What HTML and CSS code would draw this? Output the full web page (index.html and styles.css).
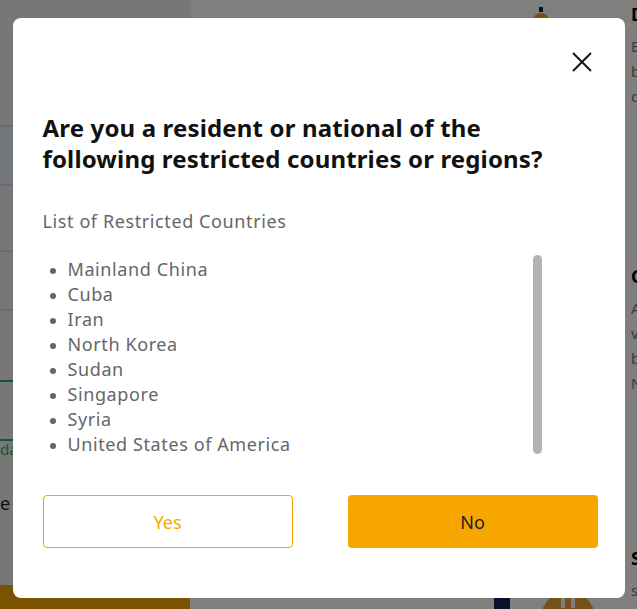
FILE: index.html
```html
<!DOCTYPE html>
<html lang="en">
<head>
    <meta charset="UTF-8">
    <meta name="viewport" content="width=device-width, initial-scale=1.0">
    <title>Restricted Countries</title>
    <link rel="stylesheet" href="styles.css">
</head>
<body>

    <div class="page">
        <aside class="side">
            <div class="side-head"></div>
            <div class="side-tab"></div>
            <div class="side-row"></div>
            <div class="side-row short"></div>
            <div class="side-gap"></div>
            <div class="side-green">
                <span class="green-text">da</span>
            </div>
            <div class="side-note">e t</div>
            <div class="side-bar"></div>
        </aside>

        <main class="center">
            <div class="top-icon">
                <svg width="16" height="14" viewBox="0 0 16 14">
                    <circle cx="8" cy="14" r="8" fill="#ec9e10"/>
                    <rect x="6" y="0" width="4" height="5" fill="#122054"/>
                </svg>
            </div>
            <div class="bottom-icons">
                <span class="navy-box"></span>
                <span class="chat-ball">
                    <svg width="54" height="20" viewBox="0 0 54 20">
                        <rect x="20" y="5" width="4" height="12" fill="#fff"/>
                        <rect x="30" y="5" width="4" height="12" fill="#fff"/>
                    </svg>
                </span>
            </div>
        </main>

        <aside class="info">
            <h4>D</h4>
            <p>E</p>
            <p>b</p>
            <p>c</p>
            <h4 class="gap-top">C</h4>
            <p>A</p>
            <p>v</p>
            <p>b</p>
            <p>N</p>
            <h4 class="gap-big">S</h4>
            <p>s</p>
        </aside>
    </div>

    <div class="overlay">
        <div class="modal">
            <div class="modal-top">
                <button class="close" aria-label="Close">
                    <svg width="20" height="20" viewBox="0 0 20 20">
                        <path d="M1 1 L19 19 M19 1 L1 19" stroke="#111" stroke-width="1.9" fill="none"/>
                    </svg>
                </button>
            </div>

            <h2>Are you a resident or national of the following restricted countries or regions?</h2>

            <p class="subtitle">List of Restricted Countries</p>

            <div class="list-box">
                <ul class="countries">
                    <li>Mainland China</li>
                    <li>Cuba</li>
                    <li>Iran</li>
                    <li>North Korea</li>
                    <li>Sudan</li>
                    <li>Singapore</li>
                    <li>Syria</li>
                    <li>United States of America</li>
                </ul>
                <div class="thumb"></div>
            </div>

            <div class="actions">
                <button class="btn btn-outline">Yes</button>
                <button class="btn btn-fill">No</button>
            </div>
        </div>
    </div>

</body>
</html>
```

FILE: styles.css
```css
body {
    margin: 0;
    font-family: 'Noto Sans', 'Noto Sans CJK KR', sans-serif;
    overflow: hidden;
}

.page {
    display: grid;
    grid-template-columns: 190px 1fr 9px;
    height: 609px;
    overflow: hidden;
    background: #ffffff;
}

.side {
    background: #efefef;
    display: flex;
    flex-direction: column;
    overflow: hidden;
}

.side-head {
    height: 125px;
    border-bottom: 2px solid #d8d8d8;
}

.side-tab {
    height: 57px;
    background: #e6ecf7;
    border-bottom: 2px solid #d8d8d8;
}

.side-row {
    height: 64px;
    border-bottom: 2px solid #d8d8d8;
}

.side-row.short {
    height: 57px;
}

.side-gap {
    height: 69px;
    border-bottom: 2px solid #20b26c;
}

.side-green {
    height: 57px;
    border-bottom: 2px solid #20b26c;
    display: flex;
    align-items: flex-end;
}

.green-text {
    color: #20b26c;
    font-size: 15px;
    margin-bottom: -20px;
}

.side-note {
    margin-top: 50px;
    font-size: 18px;
    color: #222;
}

.side-bar {
    margin-top: auto;
    height: 24px;
    background: #f7a600;
}

.center {
    display: flex;
    flex-direction: column;
    justify-content: space-between;
    overflow: hidden;
}

.top-icon {
    margin: 7px 0 0 343px;
    line-height: 0;
}

.bottom-icons {
    display: flex;
    align-items: flex-start;
    margin-left: 304px;
    height: 18px;
}

.navy-box {
    flex: none;
    width: 16px;
    height: 18px;
    margin-top: 7px;
    background: #122054;
}

.chat-ball {
    flex: none;
    width: 54px;
    height: 54px;
    margin-left: 31px;
    border-radius: 50%;
    background: #e9a135;
    line-height: 0;
}

.info {
    padding-left: 3px;
    overflow: hidden;
    white-space: nowrap;
    font-size: 15px;
}

.info h4 {
    margin: 2px 0 8px;
    font-size: 18px;
    color: #000;
}

.info h4.gap-top {
    margin-top: 155px;
}

.info h4.gap-big {
    margin-top: 150px;
}

.info p {
    margin: 0;
    line-height: 25px;
    color: #777;
}

.overlay {
    position: fixed;
    inset: 0;
    background: rgba(0, 0, 0, 0.5);
    display: flex;
    justify-content: center;
    align-items: flex-start;
    padding-top: 18px;
}

.modal {
    width: 612px;
    height: 580px;
    box-sizing: border-box;
    padding: 0 27px 0 30px;
    background: #ffffff;
    border-radius: 8px;
}

.modal-top {
    display: flex;
    justify-content: flex-end;
    padding-top: 34px;
    height: 20px;
}

.close {
    background: none;
    border: none;
    padding: 0;
    margin-right: 6px;
    cursor: pointer;
    line-height: 0;
}

.modal h2 {
    max-width: 512px;
    margin: 40px 0 0;
    font-size: 24px;
    line-height: 31px;
    font-weight: 700;
    letter-spacing: 0.15px;
    color: #111;
}

.subtitle {
    margin: 35px 0 0;
    font-size: 18px;
    line-height: 25px;
    letter-spacing: 0.6px;
    color: #666;
}

.list-box {
    display: flex;
    margin-top: 21px;
    height: 200px;
    padding-right: 56px;
}

.countries {
    flex: 1;
    margin: 0;
    padding: 2px 0 0 25px;
    font-size: 18px;
    line-height: 25px;
    letter-spacing: 0.6px;
    color: #666;
}

.countries li::marker {
    font-size: 16px;
}

.thumb {
    width: 9px;
    height: 199px;
    border-radius: 5px;
    background: #b3b3b3;
}

.actions {
    display: flex;
    justify-content: space-between;
    margin-top: 40px;
}

.btn {
    width: 250px;
    height: 53px;
    border-radius: 4px;
    font-family: inherit;
    font-size: 18px;
    cursor: pointer;
}

.btn-outline {
    background: #ffffff;
    border: 1px solid #f7a600;
    color: #f7a600;
}

.btn-fill {
    background: #f7a600;
    border: none;
    color: #222;
}
```
